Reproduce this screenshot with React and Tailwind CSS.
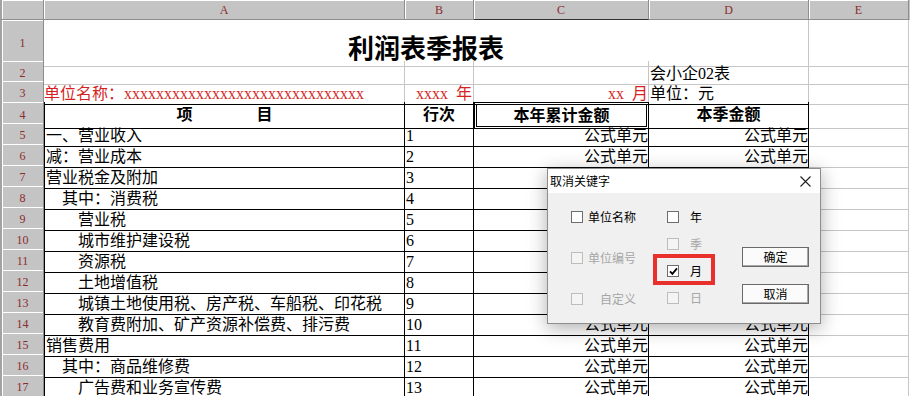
import React from "react";

const GRID = "grid grid-cols-[44px_361px_69px_175px_160px_100px_1px]";
const HDR =
  "bg-[#c4c4c4] shadow-[inset_1px_1px_0_#ffffff] border-r border-b border-[#8e8e8e] flex items-center justify-center text-[12px] text-[#8b2c2c] font-[family-name:'Liberation_Serif',serif]";
const RHDR = "border-l-2 border-l-[#a3a3a3]";
const G = "border-r border-b border-[#c6c6c6]";
const K = "border-r border-b border-black";
const CELL = "flex items-start pt-[3px] whitespace-nowrap overflow-visible text-[16px] leading-[20px]";

const rows = [
  ["一、营业收入", 0, "1"],
  ["减：营业成本", 0, "2"],
  ["营业税金及附加", 0, "3"],
  ["其中：消费税", 1, "4"],
  ["营业税", 2, "5"],
  ["城市维护建设税", 2, "6"],
  ["资源税", 2, "7"],
  ["土地增值税", 2, "8"],
  ["城镇土地使用税、房产税、车船税、印花税", 2, "9"],
  ["教育费附加、矿产资源补偿费、排污费", 2, "10"],
  ["销售费用", 0, "11"],
  ["其中：商品维修费", 1, "12"],
  ["广告费和业务宣传费", 2, "13"],
];

const INDENT = ["pl-[1px]", "pl-[17px]", "pl-[33px]"];

function RH({ n }) {
  return <div className={`${HDR} ${RHDR}`}>{n}</div>;
}

function Box({ checked, disabled }) {
  return (
    <span
      className={`w-[12px] h-[12px] shrink-0 border flex items-center justify-center ${
        disabled ? "border-[#bdbdbd] bg-[#f4f4f4]" : "border-[#6e6e6e] bg-white"
      }`}
    >
      {checked && (
        <svg width="9" height="9" viewBox="0 0 9 9">
          <path d="M1 4.3 L3.4 6.9 L8 1.4" stroke="#000" strokeWidth="1.8" fill="none" />
        </svg>
      )}
    </span>
  );
}

function Opt({ label, checked, disabled, gap }) {
  return (
    <div className="h-[12px] flex items-center">
      <Box checked={checked} disabled={disabled} />
      <span className={`${gap} leading-[12px] ${disabled ? "text-[#a6a6a6]" : "text-black"}`}>{label}</span>
    </div>
  );
}

function Btn({ children }) {
  return (
    <div className="w-[67px] h-[20px] bg-[#fbfbfb] border border-[#6a6a6a] shadow-[inset_-1px_-1px_0_#a8a8a8] flex items-center justify-center text-[12px]">
      {children}
    </div>
  );
}

export default function App() {
  return (
    <div className="relative w-[910px] h-[396px] overflow-hidden bg-white text-black font-[family-name:'Liberation_Serif','Noto_Sans_CJK_SC',serif]">
      {/* column headers */}
      <div className={`${GRID} h-[20px]`}>
        <div className={`${HDR} ${RHDR}`}></div>
        <div className={HDR}>A</div>
        <div className={HDR}>B</div>
        <div className={`${HDR} border-b-[#333333]`}>C</div>
        <div className={HDR}>D</div>
        <div className={HDR}>E</div>
        <div className="bg-[#c4c4c4]"></div>
      </div>

      {/* row 1 */}
      <div className={`${GRID} h-[41px]`}>
        <RH n={1} />
        <div className={`col-span-4 ${G} flex items-center justify-center pt-[7px] text-[26px] font-semibold font-[family-name:'Noto_Sans_CJK_SC',serif]`}>
          利润表季报表
        </div>
        <div className={G}></div>
        <div></div>
      </div>

      {/* row 2 */}
      <div className={`${GRID} h-[20px]`}>
        <RH n={2} />
        <div className={G}></div>
        <div className={G}></div>
        <div className={G}></div>
        <div className={`${G} ${CELL} pl-[1px]`}>会小企02表</div>
        <div className={G}></div>
        <div></div>
      </div>

      {/* row 3 */}
      <div className={`${GRID} h-[21px]`}>
        <RH n={3} />
        <div className={`border-r border-r-[#c6c6c6] border-b border-b-black ${CELL} text-[#d61f1f]`}>
          <span>单位名称：</span>
          <span>xxxxxxxxxxxxxxxxxxxxxxxxxxxxxx</span>
        </div>
        <div className={`border-r border-r-[#c6c6c6] border-b border-b-black ${CELL} justify-end pr-[1px] text-[#d61f1f]`}>
          xxxx&nbsp;&nbsp;年
        </div>
        <div className={`border-r border-r-[#c6c6c6] border-b border-b-black ${CELL} justify-end text-[#d61f1f]`}>
          xx&nbsp;&nbsp;月
        </div>
        <div className={`border-r border-r-[#c6c6c6] border-b border-b-black ${CELL} pl-[1px]`}>单位：元</div>
        <div className={G}></div>
        <div></div>
      </div>

      {/* row 4 */}
      <div className={`${GRID} h-[21px]`}>
        <RH n={4} />
        <div className={`${K} border-l border-l-black ${CELL} justify-center gap-[64px] font-bold`}>
          <span>项</span>
          <span>目</span>
        </div>
        <div className={`${K} ${CELL} justify-center font-bold`}>行次</div>
        <div className={`border-[3px] border-double border-black flex items-start pt-[1px] whitespace-nowrap text-[16px] leading-[20px] justify-center font-bold`}>本年累计金额</div>
        <div className={`${K} ${CELL} justify-center font-bold`}>本季金额</div>
        <div className={G}></div>
        <div></div>
      </div>

      {/* data rows */}
      {rows.map(([label, lvl, no], i) => (
        <div key={i} className={`${GRID} h-[21px]`}>
          <RH n={i + 5} />
          <div className={`${K} border-l border-l-black ${CELL} ${INDENT[lvl]}`}>{label}</div>
          <div className={`${K} ${CELL} pl-[1px]`}>{no}</div>
          <div className={`${K} ${CELL} justify-end`}>公式单元</div>
          <div className={`${K} ${CELL} justify-end`}>公式单元</div>
          <div className={G}></div>
          <div></div>
        </div>
      ))}

      {/* dialog */}
      <div className="absolute left-[547px] top-[168px] w-[274px] h-[156px] border border-[#8d8d8d] bg-[#f0f0f0] shadow-[0_4px_18px_rgba(0,0,0,0.32)] font-[family-name:'Noto_Sans_CJK_SC',sans-serif] text-[12px] text-black">
        <div className="h-[24px] bg-white flex items-center justify-between pl-[2px] pr-[9px]">
          <span className="leading-[14px]">取消关键字</span>
          <svg width="11" height="11" viewBox="0 0 11 11">
            <path d="M0.5 0.5L10.5 10.5M10.5 0.5L0.5 10.5" stroke="#1e1e1e" strokeWidth="1.1" />
          </svg>
        </div>
        <div className="flex pl-[23px] pt-[18px]">
          <div className="w-[96px] flex flex-col gap-[29px]">
            <Opt label="单位名称" gap="ml-[5px]" />
            <Opt label="单位编号" gap="ml-[5px]" disabled />
            <Opt label="自定义" gap="ml-[17px]" disabled />
          </div>
          <div className="w-[75px] flex flex-col gap-[15px]">
            <Opt label="年" gap="ml-[11px]" />
            <Opt label="季" gap="ml-[11px]" disabled />
            <Opt label="月" gap="ml-[11px]" checked />
            <Opt label="日" gap="ml-[11px]" disabled />
          </div>
          <div className="flex flex-col gap-[17px] pt-[36px]">
            <Btn>确定</Btn>
            <Btn>取消</Btn>
          </div>
        </div>
        <div className="absolute left-[105px] top-[85px] w-[62px] h-[31px] border-4 border-[#e8302c]"></div>
      </div>
    </div>
  );
}
